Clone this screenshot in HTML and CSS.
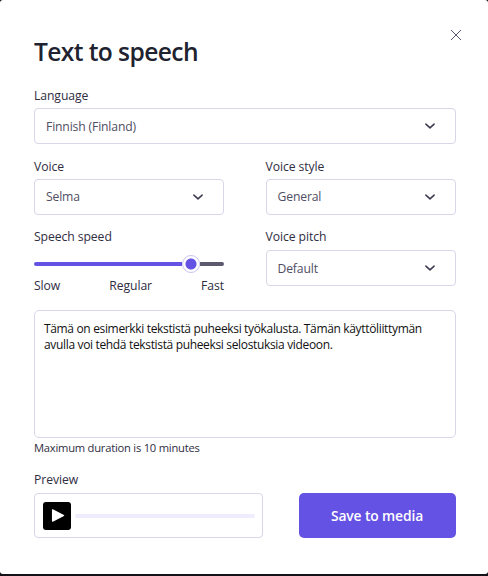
FILE: index.html
```
<!DOCTYPE html>
<html lang="en">
<head>
    <meta charset="UTF-8">
    <meta name="viewport" content="width=device-width, initial-scale=1.0">
    <title>Text to speech</title>
    <link rel="stylesheet" href="styles.css">
</head>
<body>
    <div class="modal">
        <div class="modal-header">
            <h1>Text to speech</h1>
            <button class="close" type="button" aria-label="Close">
                <svg width="12" height="12" viewBox="0 0 12 12"><path d="M1 1l10 10M11 1L1 11"/></svg>
            </button>
        </div>

        <div class="field language">
            <span class="label">Language</span>
            <div class="select">
                <span class="value">Finnish (Finland)</span>
                <svg class="chevron" width="12" height="8" viewBox="0 0 12 8"><path d="M1.9 2.1L6 5.9l4.1-3.8"/></svg>
            </div>
        </div>

        <div class="row voices">
            <div class="field">
                <span class="label">Voice</span>
                <div class="select">
                    <span class="value">Selma</span>
                    <svg class="chevron" width="12" height="8" viewBox="0 0 12 8"><path d="M1.9 2.1L6 5.9l4.1-3.8"/></svg>
                </div>
            </div>
            <div class="field">
                <span class="label">Voice style</span>
                <div class="select">
                    <span class="value">General</span>
                    <svg class="chevron" width="12" height="8" viewBox="0 0 12 8"><path d="M1.9 2.1L6 5.9l4.1-3.8"/></svg>
                </div>
            </div>
        </div>

        <div class="row tuning">
            <div class="field">
                <span class="label">Speech speed</span>
                <div class="slider">
                    <div class="slider-fill"></div>
                    <div class="slider-thumb"></div>
                    <div class="slider-rest"></div>
                </div>
                <div class="slider-labels">
                    <span>Slow</span>
                    <span>Regular</span>
                    <span>Fast</span>
                </div>
            </div>
            <div class="field">
                <span class="label">Voice pitch</span>
                <div class="select">
                    <span class="value">Default</span>
                    <svg class="chevron" width="12" height="8" viewBox="0 0 12 8"><path d="M1.9 2.1L6 5.9l4.1-3.8"/></svg>
                </div>
            </div>
        </div>

        <div class="speech-text" lang="fi">
            <p>Tämä on esimerkki tekstistä puheeksi työkalusta. Tämän käyttöliittymän avulla voi tehdä tekstistä puheeksi selostuksia videoon.</p>
        </div>
        <p class="note">Maximum duration is 10 minutes</p>

        <span class="label">Preview</span>
        <div class="footer">
            <div class="player">
                <button class="play" type="button" aria-label="Play">
                    <svg width="14" height="15" viewBox="0 0 14 15"><path d="M1.6 1.9v11.2l11-5.6z"/></svg>
                </button>
                <div class="progress"></div>
            </div>
            <button class="save" type="button">Save to media</button>
        </div>
    </div>
</body>
</html>
```
FILE: styles.css
```
* {
    box-sizing: border-box;
}
body {
    margin: 0;
    height: 576px;
    background-color: #131218;
    font-family: "Open Sans", "Noto Sans", sans-serif;
    font-size: 12.2px;
    letter-spacing: -0.08px;
    color: #2f2d3f;
    overflow: hidden;
}
h1, p {
    margin: 0;
}
button {
    border: 0;
    padding: 0;
    font-family: inherit;
}
.modal {
    height: 574px;
    padding: 28px 32.5px 0 34px;
    background-color: #fff;
    border-radius: 3px;
}
.modal-header {
    display: flex;
    justify-content: space-between;
    height: 58px;
}
h1 {
    padding-top: 6px;
    font-size: 24.6px;
    font-weight: 560;
    line-height: 36px;
    letter-spacing: -0.6px;
    color: #20222f;
    white-space: nowrap;
}
.close {
    display: flex;
    width: 12px;
    height: 12px;
    margin: 1px -6px 0 0;
    background: none;
}
.close path {
    fill: none;
    stroke: #5c5975;
    stroke-width: 1;
}
.label {
    display: block;
    height: 22px;
    line-height: 19px;
    white-space: nowrap;
}
.language {
    margin-bottom: 12.5px;
}
.row {
    display: grid;
    grid-template-columns: 190px 190px;
    justify-content: space-between;
}
.voices {
    margin-bottom: 13.5px;
}
.tuning {
    height: 82px;
}
.tuning .label {
    line-height: 18px;
}
.select {
    display: flex;
    align-items: center;
    justify-content: space-between;
    height: 36px;
    padding: 0 19px 0 11px;
    border: 1px solid #d8d6e8;
    border-radius: 4px;
}
.value {
    letter-spacing: -0.16px;
    color: #504e62;
}
.chevron path {
    fill: none;
    stroke: #3c394e;
    stroke-width: 1.5;
    stroke-linecap: round;
    stroke-linejoin: round;
}
.slider {
    display: flex;
    align-items: center;
    height: 18px;
    margin-top: 5px;
}
.slider-fill {
    width: 148px;
    height: 4px;
    background-color: #6452e4;
    border-radius: 2px 0 0 2px;
}
.slider-thumb {
    width: 18px;
    height: 18px;
    border: 1px solid #c9c4ee;
    border-radius: 50%;
    background: radial-gradient(circle, #6452e4 5px, #fff 6px);
}
.slider-rest {
    flex: 1;
    height: 4px;
    background-color: #5d596f;
    border-radius: 0 2px 2px 0;
}
.slider-labels {
    display: flex;
    justify-content: space-between;
    margin-top: 4px;
    line-height: 18px;
}
.speech-text {
    height: 128px;
    padding: 10px 9px;
    border: 1px solid #d8d6e8;
    border-radius: 5px;
    font-size: 12px;
    line-height: 15.5px;
    letter-spacing: -0.34px;
    color: #111;
}
.note {
    height: 32px;
    padding-top: 1px;
    font-size: 11.2px;
    line-height: 17px;
    letter-spacing: -0.23px;
}
.footer {
    display: flex;
    justify-content: space-between;
    margin-top: 1px;
}
.player {
    display: flex;
    align-items: center;
    width: 229px;
    height: 45px;
    padding: 0 7px 0 8px;
    border: 1px solid #d8d6e8;
    border-radius: 4px;
}
.play {
    display: flex;
    align-items: center;
    justify-content: center;
    width: 28px;
    height: 28px;
    padding-left: 1px;
    background-color: #000;
    border-radius: 3px;
}
.play path {
    fill: #fff;
    stroke: #fff;
    stroke-width: 1.3;
    stroke-linejoin: round;
}
.progress {
    flex: 1;
    height: 4px;
    margin-left: 4px;
    background-color: #efecfd;
    border-radius: 2px;
}
.save {
    width: 157px;
    height: 45px;
    background-color: #6452e4;
    border-radius: 5px;
    font-size: 13.8px;
    font-weight: 560;
    letter-spacing: -0.1px;
    color: #fff;
}
```
